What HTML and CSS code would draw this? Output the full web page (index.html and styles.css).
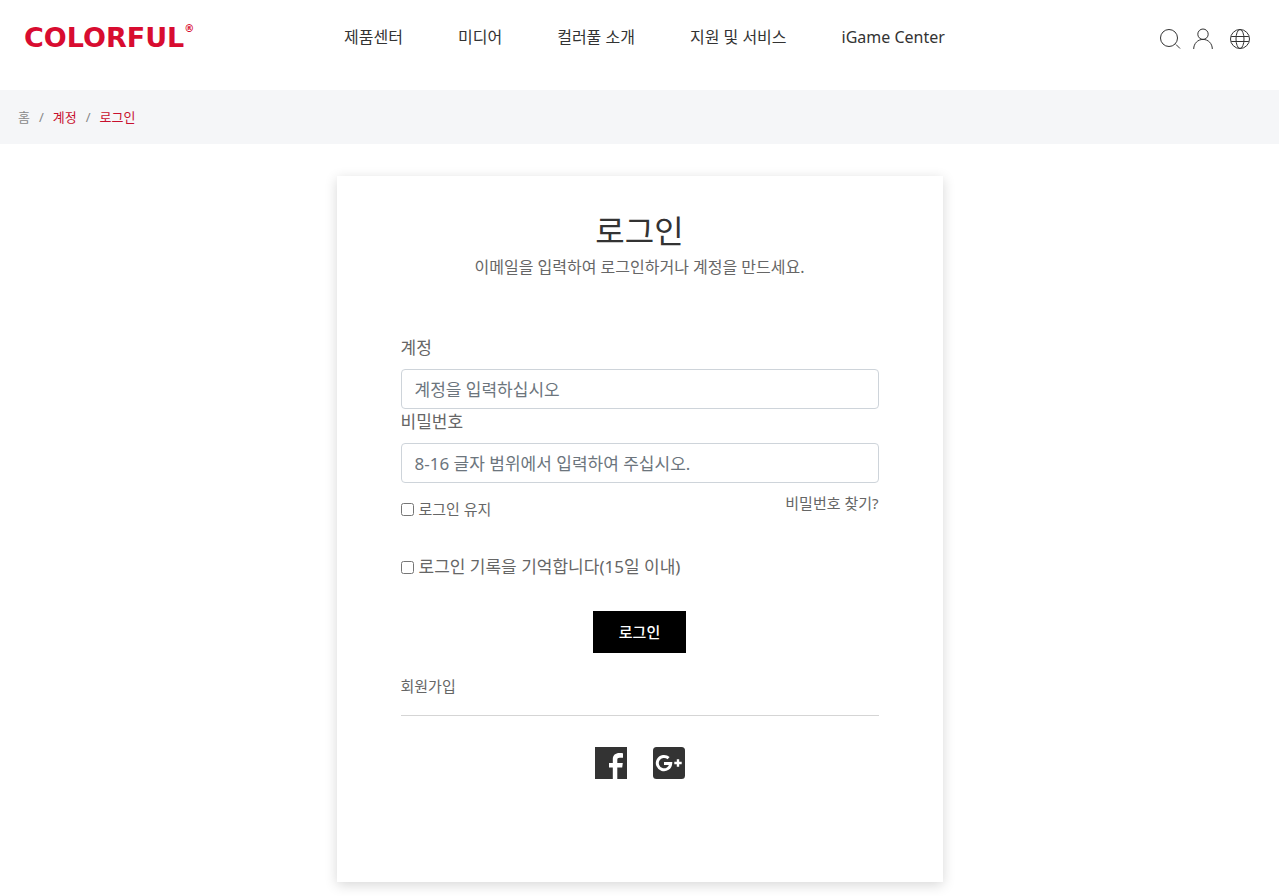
FILE: index.html
```
<!DOCTYPE html>
<html lang="ko">
<head>
    <meta charset="UTF-8">
    <meta name="viewport" content="width=device-width, initial-scale=1.0">
    <title>로그인 - COLORFUL</title>
    <link rel="stylesheet" href="styles.css">
</head>
<body>
    <header class="header">
        <a href="#" class="logo">COLORFUL<sup>®</sup></a>
        <nav class="main-nav">
            <a href="#">제품센터</a>
            <a href="#">미디어</a>
            <a href="#">컬러풀 소개</a>
            <a href="#">지원 및 서비스</a>
            <a href="#">iGame Center</a>
        </nav>
        <div class="tools">
            <button type="button" class="tool-btn" aria-label="검색">
                <svg viewBox="0 0 22 22"><circle cx="10" cy="10" r="8.5"/><path d="M17 16.500L21 20.500"/></svg>
            </button>
            <button type="button" class="tool-btn" aria-label="내 계정">
                <svg viewBox="0 0 22 22"><circle cx="11" cy="6.2" r="5.2"/><path d="M1.7 21C1.7 15.5 5.8 11.4 11 11.4S20.3 15.5 20.3 21"/></svg>
            </button>
            <button type="button" class="tool-btn tool-globe" aria-label="언어">
                <svg viewBox="0 0 22 22"><circle cx="11" cy="11" r="9.5"/><ellipse cx="11" cy="11" rx="4" ry="9.5"/><path d="M2.2 8.5H19.8M2.2 13.5H19.8"/></svg>
            </button>
        </div>
    </header>

    <nav class="breadcrumb" aria-label="breadcrumb">
        <a href="#">홈</a>
        <span>/</span>
        <a href="#" class="active">계정</a>
        <span>/</span>
        <a href="#" class="active">로그인</a>
    </nav>

    <main class="login-card">
        <div class="login-title">
            <h1>로그인</h1>
            <p>이메일을 입력하여 로그인하거나 계정을 만드세요.</p>
        </div>

        <form id="loginForm">
            <div class="form-group">
                <label for="account">계정</label>
                <input type="text" id="account" class="form-control" placeholder="계정을 입력하십시오">
            </div>
            <div class="form-group">
                <label for="password">비밀번호</label>
                <input type="password" id="password" class="form-control" placeholder="8-16 글자 범위에서 입력하여 주십시오.">
            </div>

            <div class="options">
                <div class="check check-small">
                    <input type="checkbox" id="keepLogin">
                    <label for="keepLogin">로그인 유지</label>
                </div>
                <a href="#" class="forgot-password">비밀번호 찾기?</a>
            </div>

            <div class="check">
                <input type="checkbox" id="rememberMe">
                <label for="rememberMe">로그인 기록을 기억합니다(15일 이내)</label>
            </div>

            <button type="submit" class="btn-login">로그인</button>
        </form>

        <div class="register">
            <a href="#">회원가입</a>
        </div>

        <div class="social">
            <a href="#" aria-label="Facebook">
                <svg viewBox="0 0 32 32"><path fill="#333" d="M0 0h32v32H22.300V20.500h4.900l.6-4.500h-5.500v-3c0-1.500.5-2.300 2.400-2.300H28V6.200c-.5-.1-1.900-.2-3.600-.2-3.900 0-6.600 2.200-6.600 6.200V16H14v4.500h3.800V32H0z"/></svg>
            </a>
            <a href="#" aria-label="Google Plus">
                <svg viewBox="0 0 32 32"><rect width="32" height="32" rx="3.500" fill="#333"/><path fill="none" stroke="#fff" stroke-width="3" d="M15.600 11.200A6.700 6.700 0 1 0 17.700 16.600H11"/><path fill="none" stroke="#fff" stroke-width="2.400" d="M25 12.300V19.700M21.300 16H28.700"/></svg>
            </a>
        </div>
    </main>
</body>
</html>
```
FILE: styles.css
```
:root {
    --primary-color: #d80c30;
    --text-color: #666;
    --dark-text: #333;
    --border-color: #ced4da;
}

* {
    margin: 0;
    padding: 0;
    box-sizing: border-box;
}

body {
    background-color: #fff;
    color: var(--text-color);
    font-family: "Noto Sans", "Noto Sans CJK KR", sans-serif;
    font-size: 17px;
    line-height: 26px;
}

a {
    color: inherit;
    text-decoration: none;
}

input,
button {
    font-family: inherit;
}

.header {
    display: grid;
    grid-template-columns: 1fr auto 1fr;
    align-items: center;
    padding: 16px 14px 32px 24px;
}

.logo {
    display: flex;
    align-items: center;
    height: 42px;
    padding-top: 2px;
    color: var(--primary-color);
    font-family: "DejaVu Sans", sans-serif;
    font-size: 27px;
    font-weight: bold;
}

.logo sup {
    align-self: flex-start;
    font-size: 10px;
    line-height: 22px;
}

.main-nav {
    display: flex;
    gap: 55px;
    color: var(--dark-text);
    font-size: 16px;
}

.tools {
    display: flex;
    justify-content: flex-end;
    gap: 11px;
    padding: 4px 14px 0 0;
}

.tool-btn {
    width: 22px;
    height: 22px;
    border: none;
    background: none;
    cursor: pointer;
}

.tool-btn svg {
    display: block;
    fill: none;
    stroke: #333;
    stroke-width: 1;
}

.tool-globe {
    margin-left: 4px;
}

.breadcrumb {
    display: flex;
    gap: 9px;
    padding: 14px 18px;
    background-color: #f5f6f8;
    color: #888;
    font-size: 13px;
}

.breadcrumb .active {
    color: #c8102e;
}

.login-card {
    width: 100%;
    max-width: 606px;
    margin: 32px auto 14px;
    padding: 32px 64px 103px;
    background-color: #fff;
    box-shadow: 0 3px 12px rgba(0, 0, 0, 0.16);
}

.login-title {
    margin-bottom: 55px;
    text-align: center;
}

.login-title h1 {
    color: var(--dark-text);
    font-size: 32px;
    font-weight: 400;
    line-height: 46px;
}

.login-title p {
    font-size: 16px;
}

.form-group label {
    display: block;
    margin-bottom: 8px;
}

.form-control {
    display: block;
    width: 100%;
    height: 40px;
    padding: 6px 13px;
    border: 1px solid var(--border-color);
    border-radius: 4px;
    font-size: 17px;
}

.form-control::placeholder {
    color: #6c757d;
}

.options {
    display: flex;
    justify-content: space-between;
    align-items: flex-start;
    margin-bottom: 32px;
    padding-top: 7px;
    font-size: 15px;
}

.check {
    display: flex;
    align-items: center;
    gap: 5px;
}

.check input {
    width: 13px;
    height: 13px;
}

.check-small {
    padding-top: 6px;
}

.btn-login {
    display: block;
    margin: 31px auto 20px;
    padding: 8px 26px;
    border: none;
    background-color: #000;
    color: #fff;
    font-size: 15px;
    font-weight: 500;
    line-height: 26px;
    cursor: pointer;
}

.register {
    padding-bottom: 16px;
    border-bottom: 1px solid #d5d5d5;
    font-size: 15px;
}

.social {
    display: flex;
    justify-content: center;
    gap: 26px;
    padding-top: 31px;
}

.social svg {
    display: block;
    width: 32px;
    height: 32px;
}

@media (max-width: 900px) {
    .header {
        grid-template-columns: 1fr auto;
    }

    .main-nav {
        grid-row: 2;
        grid-column: 1 / -1;
        flex-wrap: wrap;
        gap: 24px;
    }

    .login-card {
        padding-left: 24px;
        padding-right: 24px;
    }
}
```
